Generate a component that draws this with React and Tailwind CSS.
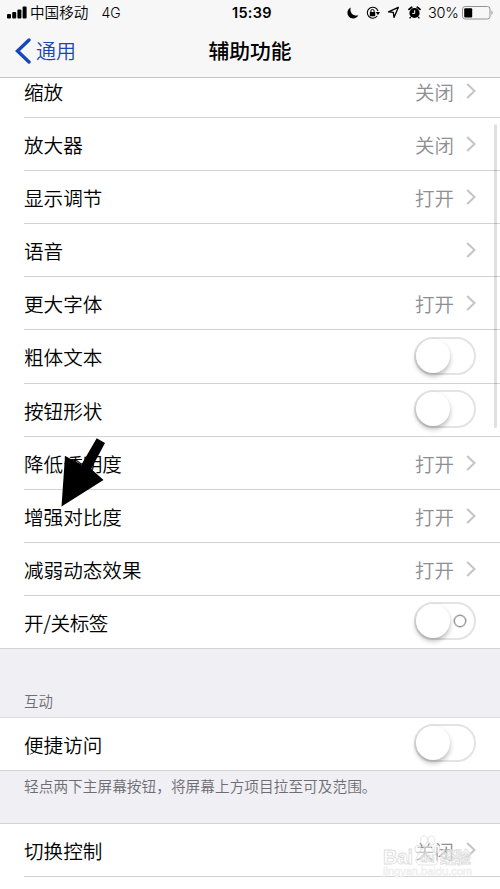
import React from "react";

const rows = [
  { label: "缩放", value: "关闭" },
  { label: "放大器", value: "关闭" },
  { label: "显示调节", value: "打开" },
  { label: "语音", value: "" },
  { label: "更大字体", value: "打开" },
  { label: "粗体文本", toggle: true },
  { label: "按钮形状", toggle: true },
  { label: "降低透明度", value: "打开" },
  { label: "增强对比度", value: "打开" },
  { label: "减弱动态效果", value: "打开" },
  { label: "开/关标签", toggle: true, mark: true },
];

const Chevron = () => (
  <svg width="10" height="18" viewBox="0 0 10 18" fill="none" className="shrink-0">
    <path d="M1.2 2 L8.5 9 L1.2 16" stroke="#c4c4c8" strokeWidth="2" />
  </svg>
);

const Toggle = ({ mark }) => (
  <div className="relative mb-[2px] h-[38px] w-[62px] shrink-0 rounded-full border-[2.5px] border-[#e3e3e3] bg-white">
    <div className="absolute top-0 left-0 h-[34px] w-[34px] rounded-full bg-white shadow-[0_3px_5px_rgba(0,0,0,0.28)]" />
    {mark && (
      <div className="absolute top-[11px] right-2 h-3 w-3 rounded-full border-[1.5px] border-[#8c8c8c] ring-[0.5px] ring-[#8c8c8c]" />
    )}
  </div>
);

const Row = ({ label, value, toggle, mark, last }) => (
  <div className="flex h-[53.1px] shrink-0 bg-white pl-6">
    <div
      className={`flex flex-1 items-center justify-between border-b border-[#d2d2d4] pr-6 ${
        last ? "-ml-6 pl-6" : ""
      }`}
    >
      <span className={`pt-[1.5px] text-[19.6px] leading-none ${mark ? "tracking-[-0.4px]" : ""}`}>
        {label}
      </span>
      {toggle ? (
        <Toggle mark={mark} />
      ) : (
        <div className="flex items-center gap-3">
          <span className="pt-[1.5px] text-[19.5px] leading-none text-[#8e8e93]">{value}</span>
          <Chevron />
        </div>
      )}
    </div>
  </div>
);

const StatusBar = () => (
  <div className="flex h-[25px] items-center pl-[7px]">
    <div className="flex w-[225px] shrink-0 items-center">
      <svg width="20" height="13" viewBox="0 0 20 13" fill="#000">
        <rect x="0" y="8" width="4" height="4.5" rx="1" />
        <rect x="5.2" y="6" width="4" height="6.5" rx="1" />
        <rect x="10.4" y="3.5" width="4" height="9" rx="1" />
        <rect x="15.6" y="0.5" width="4" height="12" rx="1" />
      </svg>
      <span className="ml-[3px] text-[14.6px] leading-none">中国移动</span>
      <span className="ml-[13px] font-['Inter'] text-[14px] leading-none">4G</span>
    </div>
    <span className="w-[115px] shrink-0 pt-px font-['Inter'] text-[14.5px] leading-none font-semibold tracking-[0.3px]">
      15:39
    </span>
    <div className="flex shrink-0 items-center">
      <svg width="12" height="12" viewBox="0 0 12 12">
        <path d="M3.8 0.6 C-0.6 2.6 -0.6 8.6 3.2 10.7 C6.4 12.5 10.2 11 11.4 8.2 C6.4 9.8 2.2 5.6 3.8 0.6Z" />
      </svg>
      <svg width="14" height="14" viewBox="0 0 14 14" fill="none" className="ml-[7px]">
        <path d="M11.2 10 A5.5 5.5 0 1 1 12 5" stroke="#000" strokeWidth="1.1" />
        <path d="M9.8 6 L14 6 L11.9 9.2Z" fill="#000" />
        <rect x="3.8" y="6" width="5.4" height="4.2" rx="0.5" fill="#000" />
        <path d="M4.9 6.5 V5 A1.6 1.6 0 0 1 8.1 5 V6.5" stroke="#000" />
      </svg>
      <svg width="13" height="13" viewBox="0 0 13 13" fill="none" className="ml-[7px]">
        <path
          d="M11.3 1.4 L1.4 5.8 L6.3 6.4 L7 11.4Z"
          stroke="#000"
          strokeWidth="1.3"
          strokeLinejoin="round"
        />
      </svg>
      <svg width="13" height="13" viewBox="0 0 13 13" fill="none" className="ml-2">
        <circle cx="6.5" cy="7" r="5.1" fill="#000" />
        <path d="M1 3.4 L3.7 1.2 M12 3.4 L9.3 1.2" stroke="#000" strokeWidth="1.8" strokeLinecap="round" />
        <path d="M2.8 10.8 L1.6 12.4 M10.2 10.8 L11.4 12.4" stroke="#000" strokeWidth="1.3" />
        <path d="M6.7 4.2 V7.4 H4.3" stroke="#fff" strokeWidth="1" />
      </svg>
      <span className="ml-[7px] pt-px font-['Inter'] text-[14.5px] leading-none tracking-[-0.3px]">
        30%
      </span>
      <svg width="32" height="14" viewBox="0 0 32 14" fill="none" className="ml-1 shrink-0">
        <rect x="0.5" y="0.5" width="27.5" height="12.5" rx="2.6" stroke="#929292" />
        <rect x="2.2" y="2.2" width="8" height="9.2" rx="1" fill="#000" />
        <path d="M29.5 4.6 C31 5.2 31 8.3 29.5 8.9Z" fill="#929292" />
      </svg>
    </div>
  </div>
);

// Outlined translucent logo in the bottom right corner
const Watermark = () => (
  <div className="absolute top-[833px] left-[383px] w-[94px]">
    <svg width="94" height="52" viewBox="0 0 94 52">
      <g fill="#fff" fillOpacity="0.45" stroke="#dcdcdc" strokeWidth="0.8">
        <text x="0" y="31" fontSize="20" fontFamily="Liberation Sans" fontWeight="700" textLength="30">
          Bai
        </text>
        <ellipse cx="35" cy="16" rx="3" ry="4" />
        <ellipse cx="41" cy="7.5" rx="3.4" ry="4.6" />
        <ellipse cx="48.5" cy="7.5" rx="3.4" ry="4.6" />
        <ellipse cx="54" cy="16" rx="3" ry="4" />
        <path d="M44.5 13 C49 13 50 19 53 22 C57 28 54 33 49 32 H39 C33 33 31 27 35 22 C38 19 40 13 44.5 13Z" />
        <text x="37" y="29" fontSize="12" fontWeight="700" fontFamily="Liberation Sans">
          du
        </text>
        <text x="57" y="30" fontSize="16" fontFamily="Noto Sans CJK SC" fontWeight="700" textLength="31">
          经验
        </text>
      </g>
      <text
        x="0"
        y="42"
        fontSize="11"
        fontFamily="Liberation Sans"
        fill="#fff"
        stroke="#ececec"
        strokeWidth="0.6"
        textLength="89"
      >
        jingyan.baidu.com
      </text>
    </svg>
  </div>
);

function App() {
  return (
    <div className="relative flex h-[889px] w-[500px] flex-col overflow-hidden bg-[#efeff4] font-['Noto_Sans_CJK_SC',sans-serif] font-[350] text-black">
      <header className="z-10 h-[78px] shrink-0 border-b border-[#c6c6c8] bg-[#f7f7f7]">
        <StatusBar />
        <nav className="grid h-[52px] grid-cols-3 items-center">
          <div className="flex items-center gap-1 pl-[15px] text-[#1848b8]">
            <svg width="17" height="26" viewBox="0 0 17 26" fill="none">
              <path d="M14 2 L2.5 13 L14 24" stroke="#1848b8" strokeWidth="3.4" strokeLinecap="round" />
            </svg>
            <span className="text-[20px] leading-none">通用</span>
          </div>
          <h1 className="pb-px text-center text-[20.8px] leading-none font-medium">辅助功能</h1>
        </nav>
      </header>

      <div className="-mt-[13px] flex flex-col">
        {rows.map((row, i) => (
          <Row key={row.label} {...row} last={i === rows.length - 1} />
        ))}
      </div>

      <div className="flex h-[69px] shrink-0 items-end border-b border-[#dcdce0] pb-[9px] pl-6">
        <span className="text-[14.4px] leading-none text-[#6d6d72]">互动</span>
      </div>
      <Row label="便捷访问" toggle last />
      <div className="h-[53px] shrink-0 border-b border-[#d2d2d4] pt-2 pl-6">
        <p className="text-[14.7px] leading-none whitespace-nowrap text-[#6d6d72]">
          轻点两下主屏幕按钮，将屏幕上方项目拉至可及范围。
        </p>
      </div>
      <Row label="切换控制" value="关闭" />
      <div className="flex-1 bg-white" />

      {/* scroll indicator */}
      <div className="absolute top-[124px] right-[3.5px] h-[304px] w-[3px] rounded-full bg-black/12" />

      {/* pointer arrow */}
      <svg className="absolute top-[436px] left-[58px]" width="50" height="72" viewBox="0 0 50 72">
        <path d="M38.7 2.3 L47 7 L33.2 33 L45.5 44 L3.5 70.5 L7 20 L23.5 28.5Z" />
      </svg>

      <Watermark />
    </div>
  );
}

export default App;
